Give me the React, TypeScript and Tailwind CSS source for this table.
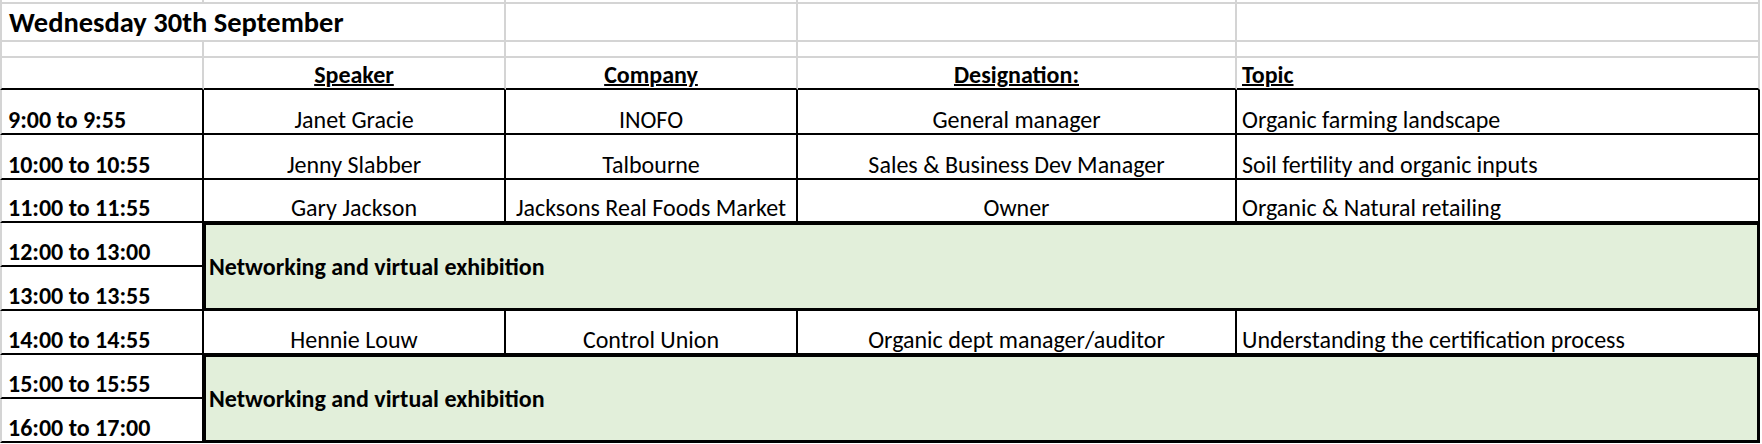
import React from 'react';

type Row = { time: string; speaker: string; company: string; designation: string; topic: string };

const top: Row[] = [
  { time: '9:00 to 9:55', speaker: 'Janet Gracie', company: 'INOFO', designation: 'General manager', topic: 'Organic farming landscape' },
  { time: '10:00 to 10:55', speaker: 'Jenny Slabber', company: 'Talbourne', designation: 'Sales & Business Dev Manager', topic: 'Soil fertility and organic inputs' },
  { time: '11:00 to 11:55', speaker: 'Gary Jackson', company: 'Jacksons Real Foods Market', designation: 'Owner', topic: 'Organic & Natural retailing' },
];

const mid: Row = { time: '14:00 to 14:55', speaker: 'Hennie Louw', company: 'Control Union', designation: 'Organic dept manager/auditor', topic: 'Understanding the certification process' };

function DataRow({ r }: { r: Row }) {
  return (
    <>
      <div className="flex items-end border-l-2 border-r-2 border-b-2 border-l-[#d4d4d4] border-r-black border-b-black pl-[6px] pb-[1px] font-bold">
        {r.time}
      </div>
      <div className="flex items-end justify-center border-r-2 border-b-2 border-black pb-[1px]">{r.speaker}</div>
      <div className="flex items-end justify-center border-r-2 border-b-2 border-black pb-[1px]">{r.company}</div>
      <div className="flex items-end justify-center border-r-2 border-b-2 border-black pb-[1px]">{r.designation}</div>
      <div className="flex items-end border-r-2 border-b-2 border-black pl-[5px] pb-[1px]">{r.topic}</div>
    </>
  );
}

function TimeCell({ t }: { t: string }) {
  return (
    <div className="flex items-end border-l-2 border-r-2 border-b-2 border-l-[#d4d4d4] border-r-black border-b-black pl-[6px] pb-[1px] font-bold">
      {t}
    </div>
  );
}

function GreenBlock({ row }: { row: string }) {
  return (
    <div
      className={`col-start-2 col-end-6 flex items-center border-t-2 border-l-2 border-r-[3px] border-b-[3px] border-black bg-[#e2efda] pl-[3px] font-bold ${row}`}
    >
      Networking and virtual exhibition
    </div>
  );
}

export default function App() {
  return (
    <div className="w-[1762px] h-[444px] overflow-hidden bg-white text-black font-['Carlito','Calibri','Lato',sans-serif] text-[24px] leading-none">
      <div className="grid grid-cols-[204px_302px_292px_439px_523px] grid-rows-[4px_38px_16px_32px_45px_45px_43px_44px_44px_44px_44px_44px]">
        {/* partial top row */}
        <div className="border-l-2 border-r-2 border-b-2 border-[#d4d4d4]" />
        <div className="border-r-2 border-b-2 border-[#d4d4d4]" />
        <div className="border-r-2 border-b-2 border-[#d4d4d4]" />
        <div className="border-r-2 border-b-2 border-[#d4d4d4]" />
        <div className="border-r-2 border-b-2 border-[#d4d4d4]" />

        {/* title row */}
        <div className="col-span-2 flex items-end border-l-2 border-r-2 border-b-2 border-[#d4d4d4] pl-[7px] pb-[3px] text-[28.5px] font-bold">
          Wednesday 30th September
        </div>
        <div className="border-r-2 border-b-2 border-[#d4d4d4]" />
        <div className="border-r-2 border-b-2 border-[#d4d4d4]" />
        <div className="border-r-2 border-b-2 border-[#d4d4d4]" />

        {/* blank row */}
        <div className="border-l-2 border-r-2 border-b-2 border-[#d4d4d4]" />
        <div className="border-r-2 border-b-2 border-[#d4d4d4]" />
        <div className="border-r-2 border-b-2 border-[#d4d4d4]" />
        <div className="border-r-2 border-b-2 border-[#d4d4d4]" />
        <div className="border-r-2 border-b-2 border-[#d4d4d4]" />

        {/* header row */}
        <div className="border-l-2 border-r-2 border-b-2 border-l-[#d4d4d4] border-r-[#d4d4d4] border-b-black" />
        <div className="flex items-end justify-center border-r-2 border-b-2 border-r-[#d4d4d4] border-b-black pb-[1px] font-bold underline decoration-2 underline-offset-[1px]">
          Speaker
        </div>
        <div className="flex items-end justify-center border-r-2 border-b-2 border-r-[#d4d4d4] border-b-black pb-[1px] font-bold underline decoration-2 underline-offset-[1px]">
          Company
        </div>
        <div className="flex items-end justify-center border-r-2 border-b-2 border-r-[#d4d4d4] border-b-black pb-[1px] font-bold underline decoration-2 underline-offset-[1px]">
          Designation:
        </div>
        <div className="flex items-end border-r-2 border-b-2 border-r-[#d4d4d4] border-b-black pl-[5px] pb-[1px] font-bold underline decoration-2 underline-offset-[1px]">
          Topic
        </div>

        {top.map((r) => (
          <DataRow key={r.time} r={r} />
        ))}

        <TimeCell t="12:00 to 13:00" />
        <GreenBlock row="row-start-8 row-end-10" />
        <TimeCell t="13:00 to 13:55" />

        <DataRow r={mid} />

        <TimeCell t="15:00 to 15:55" />
        <GreenBlock row="row-start-11 row-end-13" />
        <TimeCell t="16:00 to 17:00" />
      </div>
    </div>
  );
}
